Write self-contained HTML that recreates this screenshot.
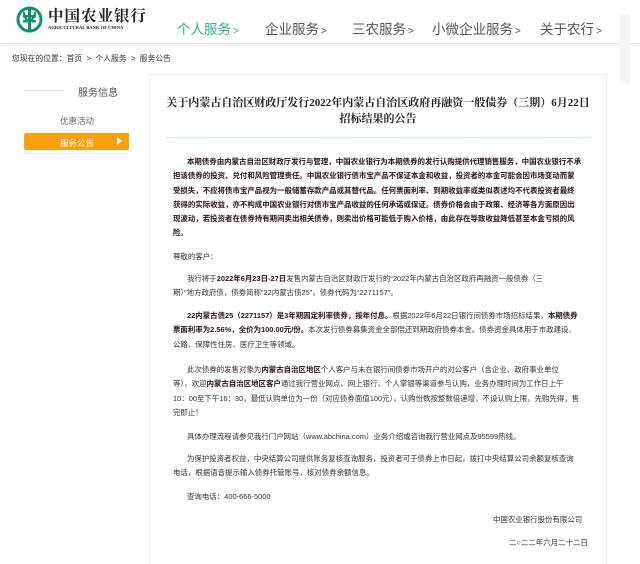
<!DOCTYPE html>
<html><head><meta charset="utf-8">
<style>
*{margin:0;padding:0;box-sizing:border-box}
body{width:640px;height:555px;overflow:hidden;background:#fff;font-family:"Liberation Sans","Noto Sans CJK SC",sans-serif;color:#333;position:relative}
.a{position:absolute;white-space:nowrap}
.hdr{position:absolute;left:0;top:0;width:640px;height:44px;background:#fff;border-bottom:1px solid #e6e6e6;box-shadow:0 2px 3px rgba(0,0,0,.06)}
.nav{font-size:13.5px;color:#555;top:18px}
.nav b{font-weight:normal;font-size:10px;margin-left:2px}
.card{position:absolute;left:149px;top:74px;width:458px;height:490px;border:1px solid #eee;border-bottom:none}
.t{position:absolute;left:0;width:456px;text-align:center;font-family:"Liberation Serif","Noto Serif CJK SC",serif;font-weight:bold;font-size:11px;color:#222}
.p{position:absolute;left:173px;font-size:7.45px;line-height:14.3px;color:#333;white-space:nowrap}
.p.bd{font-weight:bold;color:#2a1414}
.p em{font-style:normal;font-weight:bold;color:#2a1414}
.ind{padding-left:14px}
</style></head><body>
<div class="hdr"></div>
<svg class="a" style="left:16px;top:6px" width="27" height="27" viewBox="0 0 27 27">
<circle cx="13.5" cy="13.5" r="11.5" fill="none" stroke="#12906b" stroke-width="3"/>
<rect x="12" y="3" width="3" height="21" fill="#12906b"/>
<rect x="7" y="9" width="13" height="2.4" fill="#12906b"/>
<rect x="7" y="14" width="13" height="2.4" fill="#12906b"/>
<path d="M8 6 Q8 12 13 16 Q19 12 19 6" fill="none" stroke="#12906b" stroke-width="2.2"/>
</svg>
<div class="a" style="left:48px;top:4px;font-family:'Liberation Serif','Noto Serif CJK SC',serif;font-weight:bold;font-size:15.5px;letter-spacing:1px;color:#222">中国农业银行</div>
<div class="a" style="left:48px;top:25px;font-family:'Liberation Serif',serif;font-weight:bold;font-size:4.6px;color:#222">AGRICULTURAL BANK OF CHINA</div>
<div class="a nav" style="left:177px;color:#2fae8c">个人服务<b>&gt;</b></div>
<div class="a nav" style="left:265px">企业服务<b>&gt;</b></div>
<div class="a nav" style="left:352px">三农服务<b>&gt;</b></div>
<div class="a nav" style="left:432px">小微企业服务<b>&gt;</b></div>
<div class="a nav" style="left:540px">关于农行<b>&gt;</b></div>
<div class="a" style="left:620px;top:14px;width:10px;height:70px;background:#f6f6f6"></div>
<div class="a" style="left:12px;top:53px;font-size:7.8px;color:#333">您现在的位置：首页 &nbsp;&gt;&nbsp; 个人服务 &nbsp;&gt;&nbsp; 服务公告</div>

<div class="a" style="left:24px;top:90px;width:40px;height:1px;background:#e5e5e5"></div>
<div class="a" style="left:78px;top:84px;font-size:10px;color:#555">服务信息</div>
<div class="a" style="left:60px;top:115px;font-size:8.5px;color:#666">优惠活动</div>
<div class="a" style="left:24px;top:133px;width:105px;height:17px;background:#fa9f0e;border-radius:2px"></div>
<div class="a" style="left:60px;top:137px;font-size:8.5px;color:#fff">服务公告</div>
<div class="a" style="left:117px;top:137px;width:0;height:0;border-left:5px solid #fff;border-top:4px solid transparent;border-bottom:4px solid transparent"></div>
<div class="a" style="left:24px;top:153px;width:105px;height:1px;background:#eee"></div>

<div class="card">
<div class="t" style="top:19px">关于内蒙古自治区财政厅发行2022年内蒙古自治区政府再融资一般债券（三期）6月22日</div>
<div class="t" style="top:35px">招标结果的公告</div>
<div class="a" style="left:15px;top:62px;width:426px;height:1px;background:#cfeee4"></div>
</div>

<div class="p bd" style="top:155px"><div class="ind">本期债券由内蒙古自治区财政厅发行与管理，中国农业银行为本期债券的发行认购提供代理销售服务，中国农业银行不承</div>
<div>担该债券的投资、兑付和风险管理责任。中国农业银行债市宝产品不保证本金和收益，投资者的本金可能会因市场变动而蒙</div>
<div>受损失，不应将债市宝产品视为一般储蓄存款产品或其替代品。任何票面利率、到期收益率或类似表述均不代表投资者最终</div>
<div>获得的实际收益，亦不构成中国农业银行对债市宝产品收益的任何承诺或保证。债券价格会由于政策、经济等各方面原因出</div>
<div>现波动，若投资者在债券持有期间卖出相关债券，则卖出价格可能低于购入价格，由此存在导致收益降低甚至本金亏损的风</div>
<div>险。</div></div>
<div class="p" style="top:250px">尊敬的客户：</div>
<div class="p" style="top:272px"><div class="ind">我行将于<em>2022年6月23日-27日</em>发售内蒙古自治区财政厅发行的“2022年内蒙古自治区政府再融资一般债券（三</div>
<div>期）”地方政府债，债券简称“22内蒙古债25”，债券代码为“2271157”。</div></div>
<div class="p" style="top:309px"><div class="ind"><em>22内蒙古债25（2271157）是3年期固定利率债券，按年付息。</em>根据2022年6月22日银行间债券市场招标结果，<em>本期债券</em></div>
<div><em>票面利率为2.56%，全价为100.00元/份。</em>本次发行债券募集资金全部偿还到期政府债券本金。债券资金具体用于市政建设、</div>
<div>公路、保障性住房、医疗卫生等领域。</div></div>
<div class="p" style="top:363px"><div class="ind">此次债券的发售对象为<em>内蒙古自治区地区</em>个人客户与未在银行间债券市场开户的对公客户（含企业、政府事业单位</div>
<div>等），欢迎<em>内蒙古自治区地区客户</em>通过我行营业网点、网上银行、个人掌银等渠道参与认购，业务办理时间为工作日上午</div>
<div>10：00至下午16：30，最低认购单位为一份（对应债券面值100元），认购份数按整数倍递增，不设认购上限，先购先得，售</div>
<div>完即止！</div></div>
<div class="p" style="top:430px"><div class="ind">具体办理流程请参见我行门户网站（www.abchina.com）业务介绍或咨询我行营业网点及95599热线。</div></div>
<div class="p" style="top:452px"><div class="ind">为保护投资者权益，中央结算公司提供账务复核查询服务，投资者可于债券上市日起，拨打中央结算公司余额复核查询</div>
<div>电话，根据语音提示输入债券托管账号，核对债券余额信息。</div></div>
<div class="p" style="top:490px"><div class="ind">查询电话：400-666-5000</div></div>
<div class="p" style="top:513px;left:493px">中国农业银行股份有限公司</div>
<div class="p" style="top:536px;left:509px">二○二二年六月二十二日</div>
</body></html>
